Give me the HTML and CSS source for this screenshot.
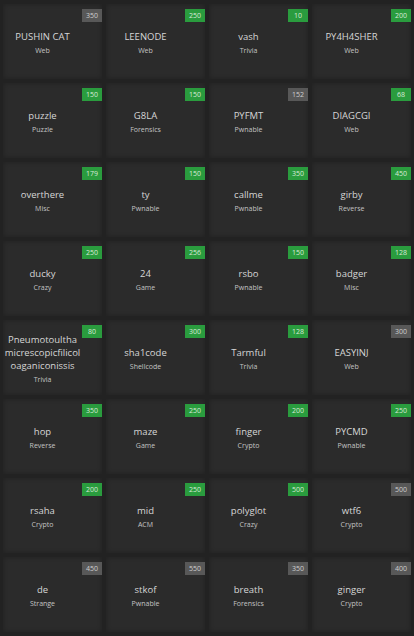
FILE: index.html
```html
<!DOCTYPE html>
<html lang="en">
<head>
<meta charset="utf-8">
<title>Challenges</title>
<link rel="stylesheet" href="styles.css">
</head>
<body>
<main class="board">
  <div class="card"><span class="pts done">350</span><div class="name">PUSHIN CAT</div><div class="cat">Web</div></div>
  <div class="card"><span class="pts">250</span><div class="name">LEENODE</div><div class="cat">Web</div></div>
  <div class="card"><span class="pts">10</span><div class="name">vash</div><div class="cat">Trivia</div></div>
  <div class="card"><span class="pts">200</span><div class="name">PY4H4SHER</div><div class="cat">Web</div></div>

  <div class="card"><span class="pts">150</span><div class="name">puzzle</div><div class="cat">Puzzle</div></div>
  <div class="card"><span class="pts">150</span><div class="name">G8LA</div><div class="cat">Forensics</div></div>
  <div class="card"><span class="pts done">152</span><div class="name">PYFMT</div><div class="cat">Pwnable</div></div>
  <div class="card"><span class="pts">68</span><div class="name">DIAGCGI</div><div class="cat">Web</div></div>

  <div class="card"><span class="pts">179</span><div class="name">overthere</div><div class="cat">Misc</div></div>
  <div class="card"><span class="pts">150</span><div class="name">ty</div><div class="cat">Pwnable</div></div>
  <div class="card"><span class="pts">350</span><div class="name">callme</div><div class="cat">Pwnable</div></div>
  <div class="card"><span class="pts">450</span><div class="name">girby</div><div class="cat">Reverse</div></div>

  <div class="card"><span class="pts">250</span><div class="name">ducky</div><div class="cat">Crazy</div></div>
  <div class="card"><span class="pts">256</span><div class="name">24</div><div class="cat">Game</div></div>
  <div class="card"><span class="pts">150</span><div class="name">rsbo</div><div class="cat">Pwnable</div></div>
  <div class="card"><span class="pts">128</span><div class="name">badger</div><div class="cat">Misc</div></div>

  <div class="card"><span class="pts">80</span><div class="name">Pneumotoultha<wbr>micrescopicfilicol<wbr>oaganiconissis</div><div class="cat">Trivia</div></div>
  <div class="card"><span class="pts">300</span><div class="name">sha1code</div><div class="cat">Shellcode</div></div>
  <div class="card"><span class="pts">128</span><div class="name">Tarmful</div><div class="cat">Trivia</div></div>
  <div class="card"><span class="pts done">300</span><div class="name">EASYINJ</div><div class="cat">Web</div></div>

  <div class="card"><span class="pts">350</span><div class="name">hop</div><div class="cat">Reverse</div></div>
  <div class="card"><span class="pts">250</span><div class="name">maze</div><div class="cat">Game</div></div>
  <div class="card"><span class="pts">200</span><div class="name">finger</div><div class="cat">Crypto</div></div>
  <div class="card"><span class="pts">250</span><div class="name">PYCMD</div><div class="cat">Pwnable</div></div>

  <div class="card"><span class="pts">200</span><div class="name">rsaha</div><div class="cat">Crypto</div></div>
  <div class="card"><span class="pts">250</span><div class="name">mid</div><div class="cat">ACM</div></div>
  <div class="card"><span class="pts">500</span><div class="name">polyglot</div><div class="cat">Crazy</div></div>
  <div class="card"><span class="pts done">500</span><div class="name">wtf6</div><div class="cat">Crypto</div></div>

  <div class="card"><span class="pts done">450</span><div class="name">de</div><div class="cat">Strange</div></div>
  <div class="card"><span class="pts done">550</span><div class="name">stkof</div><div class="cat">Pwnable</div></div>
  <div class="card"><span class="pts done">350</span><div class="name">breath</div><div class="cat">Forensics</div></div>
  <div class="card"><span class="pts done">400</span><div class="name">ginger</div><div class="cat">Crypto</div></div>
</main>
</body>
</html>
```

FILE: styles.css
```css
html, body {
  margin: 0;
  padding: 0;
  background: #222222;
}

body {
  font-family: "Open Sans", "DejaVu Sans", sans-serif;
  color: #d4d4d4;
}

.board {
  display: grid;
  grid-template-columns: repeat(4, 99px);
  grid-auto-rows: 75px;
  gap: 4px;
  padding: 4px 3px;
}

.card {
  position: relative;
  display: flex;
  flex-direction: column;
  justify-content: center;
  align-items: center;
  padding: 4px 20px 0 0;
  background: #2b2b2b;
  box-shadow: inset 0 0 5px rgba(0, 0, 0, 0.25);
  text-align: center;
}

.name {
  font-size: 9.5px;
  line-height: 13px;
  color: #d6d6d6;
  max-width: 79px;
}

.cat {
  font-size: 7px;
  line-height: 13px;
  margin-top: 1px;
  color: #c4c4c4;
}

.pts {
  position: absolute;
  top: 5px;
  right: 0;
  width: 20px;
  height: 13px;
  line-height: 13px;
  font-size: 7px;
  text-align: center;
  color: #d8e8d8;
  background: #2a9c3e;
}

.pts.done {
  background: #585858;
  color: #cfcfcf;
}
```
